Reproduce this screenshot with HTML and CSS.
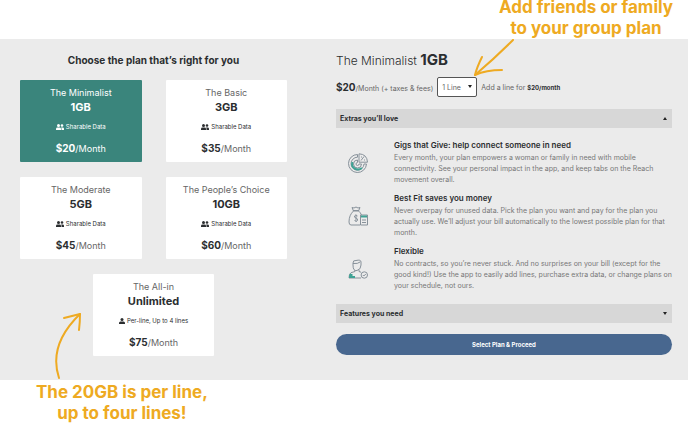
FILE: index.html
```html
<!DOCTYPE html>
<html lang="en">
<head>
    <meta charset="UTF-8">
    <meta name="viewport" content="width=device-width, initial-scale=1.0">
    <title>Choose your plan</title>
    <link rel="stylesheet" href="styles.css">
</head>
<body>
    <svg class="symbols" aria-hidden="true">
        <symbol id="users" viewBox="0 0 16 12">
            <circle cx="5" cy="3" r="3"/>
            <path d="M0 12V9.500Q0 7 3 7h4q3 0 3 2.500V12z"/>
            <circle cx="12" cy="3" r="2.600"/>
            <path d="M11 12V9.500Q11 8 10 7h3q3 0 3 2.500V12z"/>
        </symbol>
        <symbol id="user" viewBox="0 0 12 12">
            <circle cx="6" cy="3" r="3"/>
            <path d="M0 12V10Q0 7 3 7h6q3 0 3 3v2z"/>
        </symbol>
    </svg>

    <div class="callout callout-top">
        <p>Add friends or family<br>to your group plan</p>
        <svg class="arrow arrow-down" viewBox="0 0 42 40" aria-hidden="true">
            <path d="M40 1Q22 19 2 36"/>
            <path d="M9 18Q4 28 2 36Q13 31 29 31"/>
        </svg>
    </div>

    <main class="plans">
        <section class="chooser">
            <h1>Choose the plan that’s right for you</h1>
            <div class="cards">
                <button class="card selected" type="button">
                    <span class="name">The Minimalist</span>
                    <strong class="size">1GB</strong>
                    <span class="sharing"><svg class="users"><use href="#users"/></svg>Sharable Data</span>
                    <span class="price"><b>$20</b>/Month</span>
                </button>
                <button class="card" type="button">
                    <span class="name">The Basic</span>
                    <strong class="size">3GB</strong>
                    <span class="sharing"><svg class="users"><use href="#users"/></svg>Sharable Data</span>
                    <span class="price"><b>$35</b>/Month</span>
                </button>
                <button class="card" type="button">
                    <span class="name">The Moderate</span>
                    <strong class="size">5GB</strong>
                    <span class="sharing"><svg class="users"><use href="#users"/></svg>Sharable Data</span>
                    <span class="price"><b>$45</b>/Month</span>
                </button>
                <button class="card" type="button">
                    <span class="name">The People’s Choice</span>
                    <strong class="size">10GB</strong>
                    <span class="sharing"><svg class="users"><use href="#users"/></svg>Sharable Data</span>
                    <span class="price"><b>$60</b>/Month</span>
                </button>
                <button class="card" type="button">
                    <span class="name">The All-in</span>
                    <strong class="size">Unlimited</strong>
                    <span class="sharing"><svg class="user"><use href="#user"/></svg>Per-line, Up to 4 lines</span>
                    <span class="price"><b>$75</b>/Month</span>
                </button>
            </div>
        </section>

        <section class="details">
            <h2>The Minimalist <b>1GB</b></h2>
            <div class="pricing">
                <span class="total"><b>$20</b>/Month (+ taxes &amp; fees)</span>
                <span class="lines">
                    <select aria-label="Number of lines">
                        <option>1 Line</option>
                        <option>2 Lines</option>
                        <option>3 Lines</option>
                        <option>4 Lines</option>
                    </select>
                </span>
                <span class="add-line">Add a line for <b>$20/month</b></span>
            </div>

            <button class="accordion open" type="button" aria-expanded="true">Extras you’ll love</button>
            <ul class="extras">
                <li>
                    <svg class="icon" viewBox="0 0 20 20" aria-hidden="true">
                        <path d="M9.500 1.500A9 9 0 1 0 18.500 11H16A6.500 6.500 0 1 1 9.500 4.200z"/>
                        <path d="M9.500 7a4 4 0 1 0 4 4h-2.500a1.500 1.500 0 1 1-1.500-1.500z"/>
                        <path class="teal" d="M4.500 9a5.500 5.500 0 0 0 2 6.500q4 2.200 7.500-.5"/>
                        <path d="M11 .8v8.400h8.500q-.5-8-8.500-8.400z"/>
                        <path d="M13 7.500l3-4M13 4h1M16 7h1"/>
                    </svg>
                    <div class="text">
                        <h3>Gigs that Give: help connect someone in need</h3>
                        <p>Every month, your plan empowers a woman or family in need with mobile connectivity. See your personal impact in the app, and keep tabs on the Reach movement overall.</p>
                    </div>
                </li>
                <li>
                    <svg class="icon" viewBox="0 0 20 20" aria-hidden="true">
                        <path d="M12 19H3Q1 19 1 16Q1 9 5.500 5h5q2 1.500 3 4M5.500 5L4 1.500l2 .5 2-1 2 1 2-.5L10.500 5M5 4.500h6"/>
                        <path d="M12.500 9h7v10h-7zM14 14h4M14 16.500h4"/>
                        <path class="teal" d="M13 10.500h6"/>
                        <path d="M9.500 10q-2.500-1.500-3 0t1.500 2 1.500 2.500-3 0M8 8.500v7"/>
                    </svg>
                    <div class="text">
                        <h3>Best Fit saves you money</h3>
                        <p>Never overpay for unused data. Pick the plan you want and pay for the plan you actually use. We’ll adjust your bill automatically to the lowest possible plan for that month.</p>
                    </div>
                </li>
                <li>
                    <svg class="icon" viewBox="0 0 20 20" aria-hidden="true">
                        <path d="M5 4q0-3 3-2.500 5-1.200 5 1.500v3q0 4.500-4 5.500T5 6zM5 4.500q5 .5 7-1.500"/>
                        <path d="M7 11v1.500l-4 1.200q-2 1-2 5.300h12M11 11v1.500l2 .7"/>
                        <path class="teal" d="M3 15q-1 1-1 3h5M3.500 15v3"/>
                        <circle cx="16.300" cy="16" r="3.200"/>
                        <path d="M14.800 16l1 1 2-2"/>
                    </svg>
                    <div class="text">
                        <h3>Flexible</h3>
                        <p>No contracts, so you’re never stuck. And no surprises on your bill (except for the good kind!) Use the app to easily add lines, purchase extra data, or change plans on your schedule, not ours.</p>
                    </div>
                </li>
            </ul>
            <button class="accordion" type="button" aria-expanded="false">Features you need</button>
            <button class="proceed" type="button">Select Plan &amp; Proceed</button>
        </section>
    </main>

    <div class="callout callout-bottom">
        <p>The 20GB is per line,<br>up to four lines!</p>
        <svg class="arrow arrow-up" viewBox="0 0 30 68" aria-hidden="true">
            <path d="M5 66Q-6 33 26 2"/>
            <path d="M10 6Q18 4 26 2Q26 10 25 18"/>
        </svg>
    </div>
</body>
</html>
```

FILE: styles.css
```css
* {
    box-sizing: border-box;
}
body {
    margin: 0;
    font-family: Inter, "Liberation Sans", sans-serif;
    font-size: 7px;
    color: #2b2e30;
    background: #fff;
    overflow-x: hidden;
}
h1, h2, h3, p, ul {
    margin: 0;
    padding: 0;
}
button, select {
    font-family: inherit;
    color: inherit;
    cursor: pointer;
}
.symbols {
    position: absolute;
    width: 0;
    height: 0;
}

/* handwritten-style notes above and below the plans */
.callout {
    position: relative;
    display: flex;
    color: #eeaa22;
    font-size: 17px;
    font-weight: 700;
    line-height: 21px;
    text-align: center;
    white-space: nowrap;
}
.callout-top {
    height: 39px;
    justify-content: flex-end;
    align-items: flex-end;
    padding-right: 15px;
}
.callout-bottom {
    padding: 2px 0 0 36px;
}
.arrow {
    position: absolute;
    fill: none;
    stroke: #eeaa22;
    stroke-width: 2;
    stroke-linecap: round;
    stroke-linejoin: round;
}
.arrow-down {
    width: 42px;
    height: 40px;
    right: 173px;
    top: 39px;
}
.arrow-up {
    width: 30px;
    height: 68px;
    left: 54px;
    bottom: 100%;
}

.plans {
    display: grid;
    grid-template-columns: 267fr 336fr;
    gap: 49px;
    padding: 10px 16px 24px 20px;
    background: #ebebeb;
}

.chooser h1 {
    font-size: 10px;
    line-height: 22px;
    font-weight: 700;
    text-align: center;
    margin-bottom: 9px;
}
.cards {
    display: flex;
    flex-wrap: wrap;
    justify-content: center;
    gap: 15px 24px;
}
.card {
    width: calc(50% - 12px);
    display: flex;
    flex-direction: column;
    align-items: center;
    padding: 6px 0;
    background: #fff;
    border: 0;
    border-radius: 1px;
    line-height: 14px;
    font-size: 9px;
}
.card .name, .card .price {
    color: #666;
}
.card .size {
    font-size: 11px;
}
.card .sharing {
    display: flex;
    align-items: center;
    gap: 2px;
    margin: 6px 0 7px;
    font-size: 6px;
}
.card svg {
    width: 8px;
    height: 6px;
    fill: currentColor;
}
.card .user {
    width: 6px;
}
.price b {
    color: #2b2e30;
    font-size: 10px;
}
.card.selected, .selected .name, .selected .price, .selected b {
    color: #fff;
}
.card.selected {
    background: #3a857c;
}

.details h2 {
    font-size: 12px;
    line-height: 22px;
    font-weight: 300;
}
.details h2 b {
    font-size: 15px;
    font-weight: 700;
}
.pricing {
    display: flex;
    align-items: center;
    gap: 4px;
    margin: 5px 0 12px;
    color: #666;
}
.pricing b {
    color: #2b2e30;
}
.total b {
    font-size: 10px;
}
.add-line b {
    font-size: 6px;
}
.lines {
    position: relative;
}
.lines select {
    appearance: none;
    display: block;
    width: 40px;
    height: 20px;
    padding: 0 4px;
    border: 1px solid #555;
    border-radius: 2px;
    background: #fff;
    color: #666;
    font-size: 7px;
}
.lines::after, .accordion::after {
    content: "";
    border: 2px solid transparent;
    border-top: 3px solid #222;
    border-bottom: 0;
}
.lines::after {
    position: absolute;
    right: 5px;
    top: 8px;
    pointer-events: none;
}

.accordion {
    display: flex;
    justify-content: space-between;
    align-items: center;
    width: 100%;
    height: 19px;
    padding: 0 5px 0 4px;
    background: #d7d7d7;
    border: 0;
    font-size: 7px;
    font-weight: 700;
}
.accordion.open::after {
    border-top: 0;
    border-bottom: 3px solid #222;
}
.extras {
    list-style: none;
    padding: 10px 0 7px 12px;
}
.extras li {
    display: flex;
    align-items: flex-start;
    gap: 26px;
}
.extras .icon {
    flex: none;
    width: 20px;
    height: 20px;
    margin-top: 15px;
    fill: none;
    stroke: #87919a;
    stroke-width: 1;
}
.extras .icon .teal {
    stroke: #3fa294;
    stroke-width: 2;
}
.extras h3 {
    font-size: 8px;
    line-height: 14px;
    font-weight: 600;
}
.extras p {
    padding-bottom: 6px;
    line-height: 11px;
    color: #777;
}
.proceed {
    display: block;
    width: 100%;
    height: 21px;
    margin-top: 11px;
    border: 0;
    border-radius: 11px;
    background: #48678f;
    color: #fff;
    font-size: 6px;
    font-weight: 700;
}
```
